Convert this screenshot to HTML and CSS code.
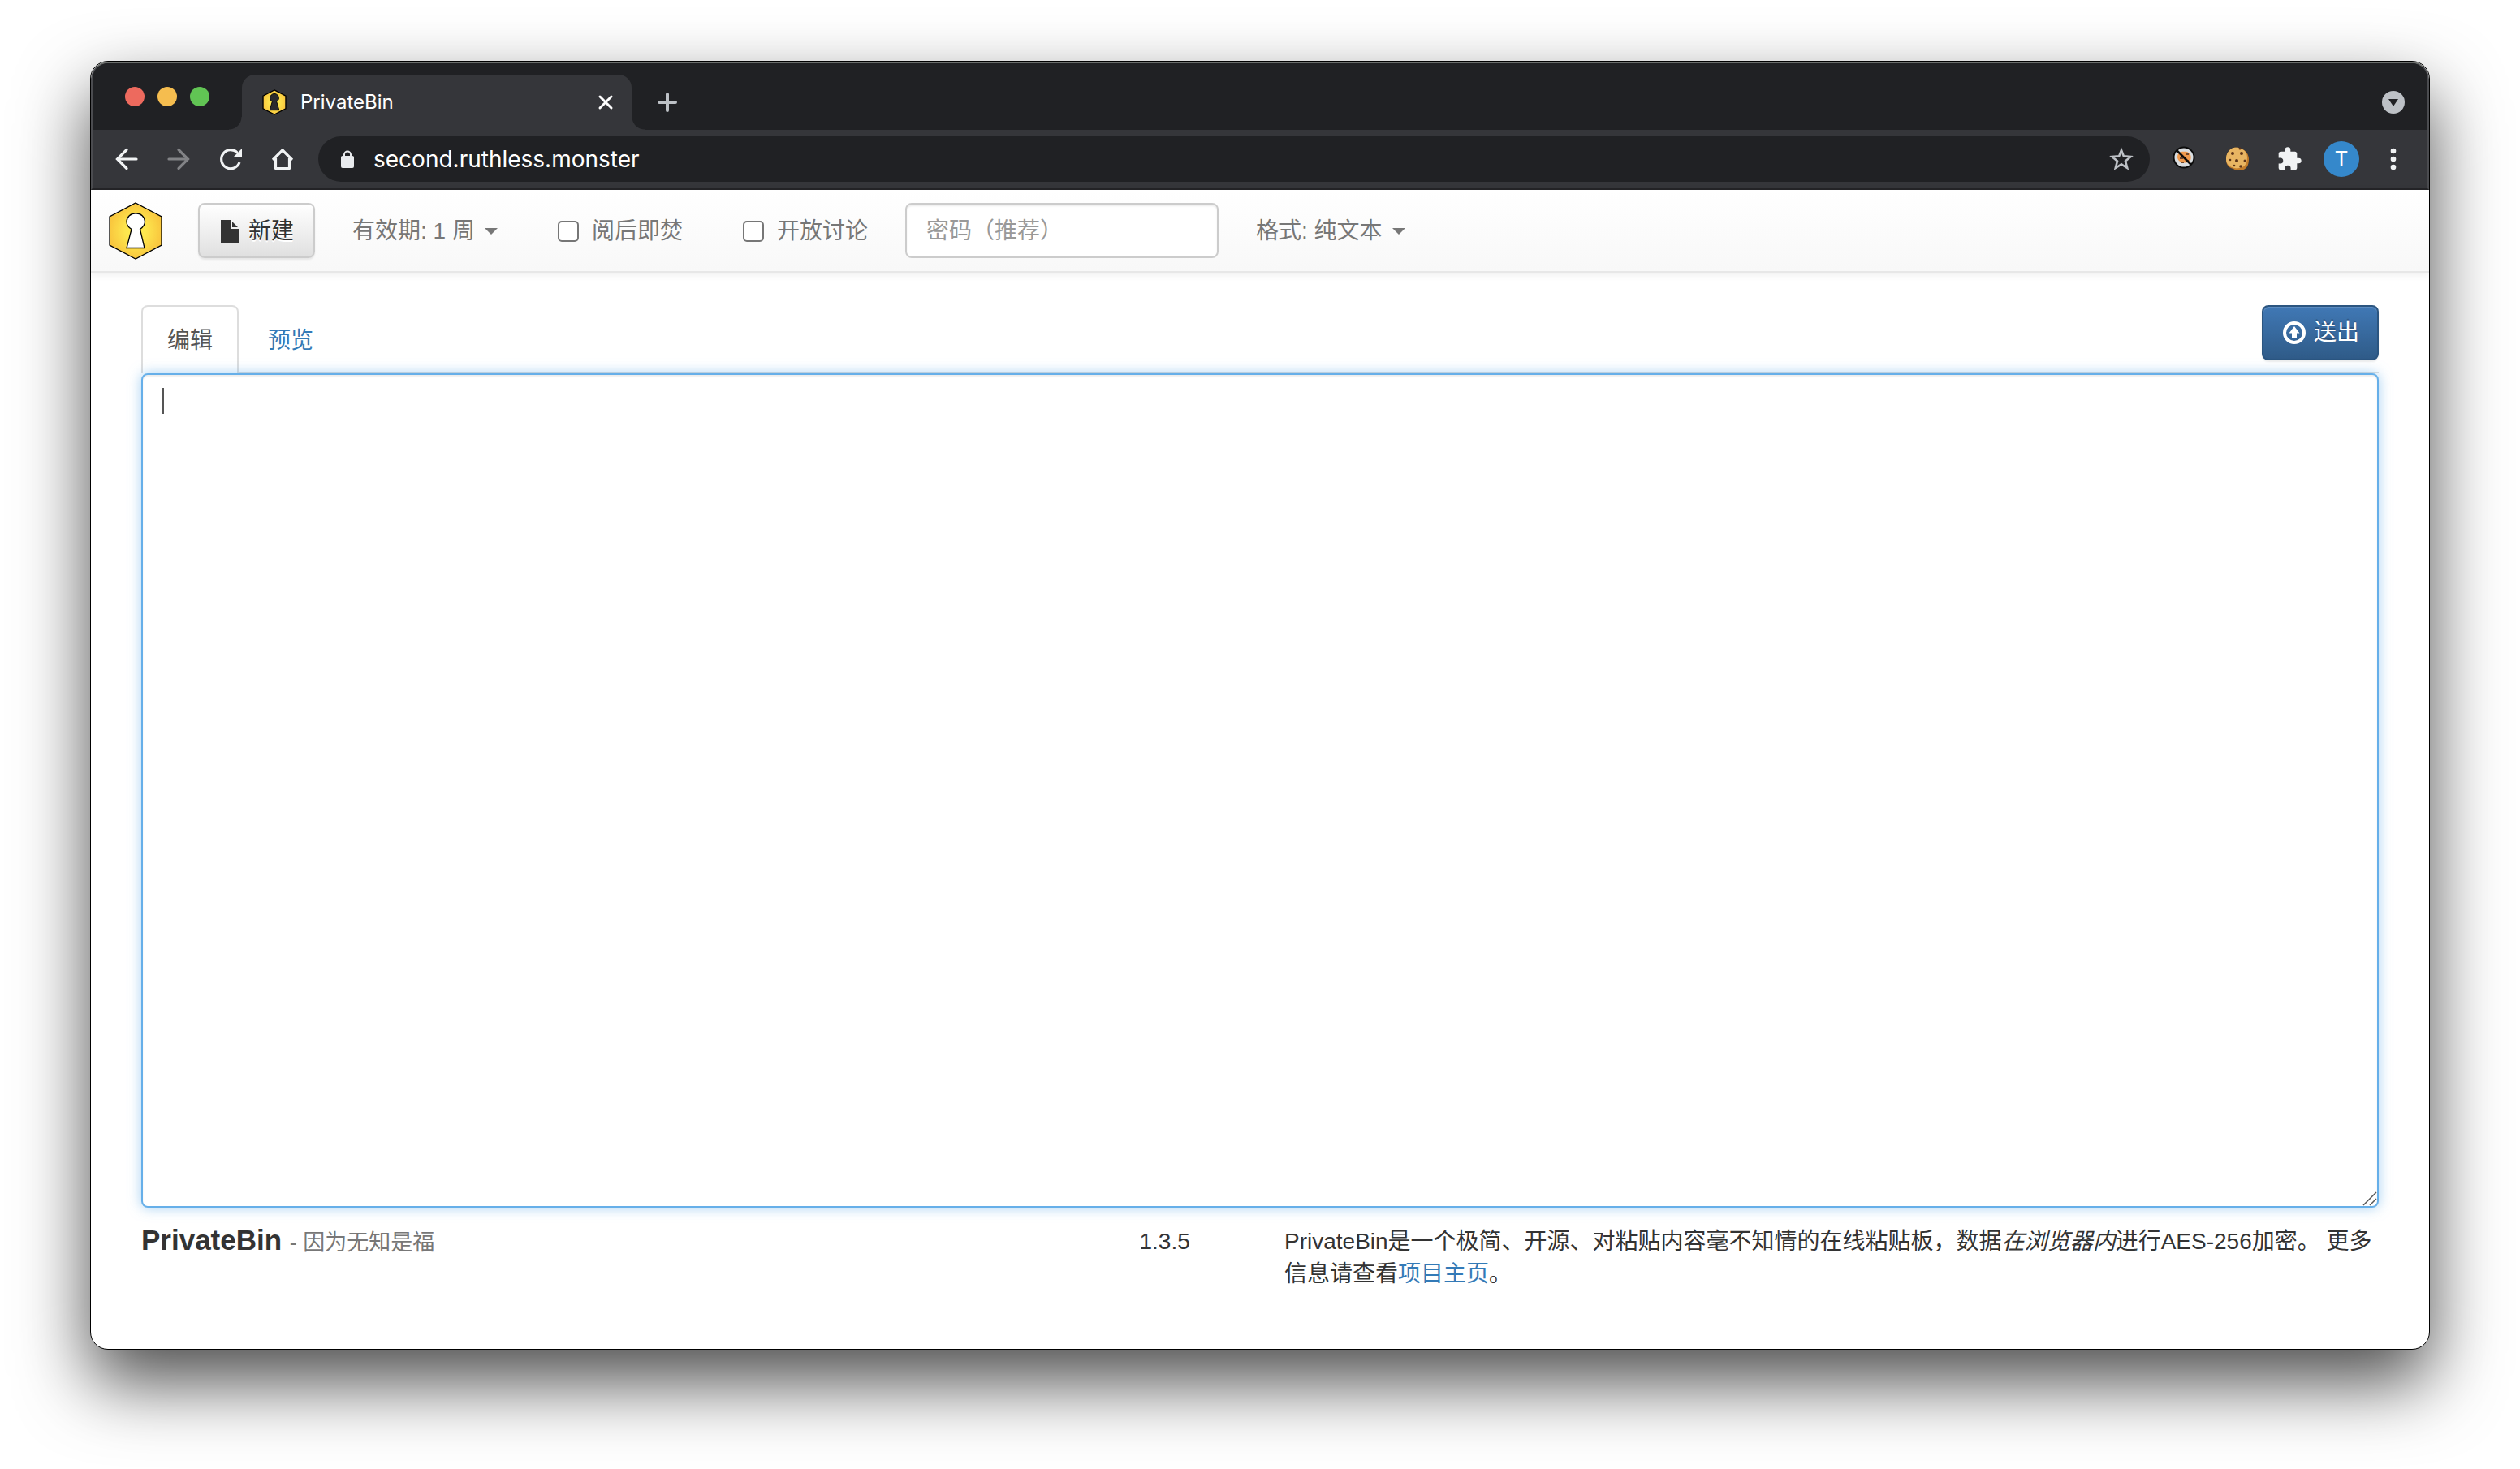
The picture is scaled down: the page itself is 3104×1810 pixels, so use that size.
FILE: index.html
```html
<!DOCTYPE html>
<html lang="zh-CN">
<head>
<meta charset="utf-8">
<title>PrivateBin</title>
<link rel="stylesheet" href="styles.css">
</head>
<body>
<div class="window">
  <header class="chrome">
    <div class="tabstrip">
      <div class="lights">
        <button class="light light-close" aria-label="Close"></button>
        <button class="light light-min" aria-label="Minimize"></button>
        <button class="light light-max" aria-label="Zoom"></button>
      </div>
      <div class="browser-tab">
        <svg class="favicon" viewBox="0 0 66 71" aria-hidden="true">
          <polygon points="33,2 64,18 64,53 33,69 2,53 2,18" fill="url(#gold)" stroke="#000" stroke-width="3"/>
          <path d="M20 57 27 34C23 31 21 28 21 24A12 12 0 0 1 45 24C45 28 43 31 39 34L46 57Z" fill="#2b2b2e" stroke="#000" stroke-width="2"/>
        </svg>
        <span class="browser-tab-title">PrivateBin</span>
        <button class="icon-btn" aria-label="Close tab">
          <svg width="20" height="20" viewBox="0 0 20 20"><path d="M3 3 17 17M17 3 3 17" stroke="#fff" stroke-width="3" stroke-linecap="round"/></svg>
        </button>
      </div>
      <button class="icon-btn new-tab" aria-label="New tab">
        <svg width="24" height="24" viewBox="0 0 24 24"><path d="M12 2V22M2 12H22" stroke="#bdc1c6" stroke-width="4" stroke-linecap="round"/></svg>
      </button>
      <button class="icon-btn tab-search" aria-label="Search tabs">
        <svg width="28" height="28" viewBox="0 0 28 28"><circle cx="14" cy="14" r="14" fill="#bdc1c6"/><path d="M8 10H20L14 19Z" fill="#202124"/></svg>
      </button>
    </div>
    <div class="toolbar">
      <button class="icon-btn nav-btn" aria-label="Back">
        <svg width="32" height="32" viewBox="0 0 32 32"><path d="M28 16H5M16 4.500 4.500 16 16 27.500" fill="none" stroke="#f1f3f4" stroke-width="3.200" stroke-linecap="round"/></svg>
      </button>
      <button class="icon-btn nav-btn" aria-label="Forward">
        <svg width="32" height="32" viewBox="0 0 32 32"><path d="M4 16H27M16 4.500 27.500 16 16 27.500" fill="none" stroke="#828386" stroke-width="3.200" stroke-linecap="round"/></svg>
      </button>
      <button class="icon-btn nav-btn" aria-label="Reload">
        <svg width="32" height="32" viewBox="0 0 32 32"><path d="M27 20A11.500 11.500 0 1 1 24.500 8.300" fill="none" stroke="#f1f3f4" stroke-width="3.200"/><path d="M30 3V14H19Z" fill="#f1f3f4"/></svg>
      </button>
      <button class="icon-btn nav-btn" aria-label="Home">
        <svg width="32" height="32" viewBox="0 0 32 32"><path d="M4 17 16 5 28 17M7.500 15V27.500H24.500V15" fill="none" stroke="#f1f3f4" stroke-width="3.200" stroke-linejoin="round"/></svg>
      </button>
      <div class="omnibox">
        <svg width="16" height="22" viewBox="0 0 16 22" aria-hidden="true"><rect y="7" width="16" height="15" rx="2" fill="#e8eaed"/><path d="M4 8V5.500A4 4 0 0 1 12 5.500V8" fill="none" stroke="#e8eaed" stroke-width="2"/></svg>
        <input class="url" type="text" aria-label="Address" value="second.ruthless.monster">
        <button class="icon-btn" aria-label="Bookmark">
          <svg width="30" height="30" viewBox="0 0 30 30"><path d="M15 4 17.900 11.400 26.500 12 20 17.400 22.200 26 15 21.400 7.800 26 10 17.400 3.500 12 12.100 11.400Z" fill="none" stroke="#bdc1c6" stroke-width="2.600"/></svg>
        </button>
      </div>
      <div class="extensions">
        <button class="icon-btn ext blocker" aria-label="Cookie blocker">
          <svg width="32" height="44" viewBox="0 0 32 44"><circle cx="16" cy="20" r="12.500" fill="#d9dde0" stroke="#0c0c0c" stroke-width="2"/><path d="M8 20C8 13 13 12 20 13 25 15 26 21 23 25 18 28 9 27 8 20Z" fill="#ef9a4e"/><path d="M11 21H15M19 16H22M19 24H22M13 26H16" stroke="#70462a" stroke-width="2"/><path d="M7 11 25 29" stroke="#0c0c0c" stroke-width="2.500"/></svg>
        </button>
        <button class="icon-btn ext" aria-label="Cookies">
          <svg width="32" height="32" viewBox="0 0 32 32"><path d="M9 3C13 1 18 2 20 3 27 5 30 11 30 16 30 24 27 29 20 30 16 30 14 30 11 28 4 26 2 22 2 16 2 10 5 5 9 3Z" fill="#c47d2a"/><path d="M9 3C13 1 18 2 20 3 26 5 28 10 28 14 28 22 24 27 18 27 15 28 12 27 9 26 4 24 2 20 2 16 2 10 5 5 9 3Z" fill="#e8b562"/><g fill="#5d3418"><circle cx="10" cy="9" r="2"/><circle cx="21" cy="9" r="2"/><circle cx="15" cy="18" r="2"/><circle cx="25" cy="18" r="1.500"/><circle cx="7" cy="17" r="1.300"/><circle cx="20" cy="25" r="1.800"/><circle cx="12" cy="24" r="1.300"/><circle cx="19" cy="3" r="1.500"/></g></svg>
        </button>
        <button class="icon-btn ext" aria-label="Extensions">
          <svg width="32" height="32" viewBox="0 0 24 24"><path d="M20.500 11H19V7c0-1.100-.9-2-2-2h-4V3.500a2.500 2.500 0 0 0-5 0V5H4c-1.100 0-2 .9-2 2v3.800h1.500a2.700 2.700 0 0 1 0 5.400H2V20c0 1.100.9 2 2 2h3.800v-1.500a2.700 2.700 0 0 1 5.400 0V22H17c1.100 0 2-.9 2-2v-4h1.500a2.500 2.500 0 0 0 0-5z" fill="#f1f3f4"/></svg>
        </button>
        <button class="avatar" aria-label="Profile">T</button>
        <button class="icon-btn menu" aria-label="Menu">
          <svg width="8" height="28" viewBox="0 0 8 28"><g fill="#f1f3f4"><circle cx="4" cy="4" r="3.300"/><circle cx="4" cy="14" r="3.300"/><circle cx="4" cy="24" r="3.300"/></g></svg>
        </button>
      </div>
    </div>
  </header>

  <nav class="navbar">
    <a class="brand" href="#" aria-label="PrivateBin">
      <svg width="66" height="71" viewBox="0 0 66 71">
        <defs><radialGradient id="gold"><stop offset="0" stop-color="#ffee50"/><stop offset="0.400" stop-color="#fde64e"/><stop offset="1" stop-color="#f9c73e"/></radialGradient></defs>
        <polygon points="33,1 65,18 65,53 33,70 1,53 1,18" fill="url(#gold)" stroke="#000" stroke-width="1.300"/>
        <path d="M22 56.500 28 33.500C24 31 22 28 22 24A11 10 0 0 1 44.500 24C44.500 28 42 31 38.500 33.500L44 56.500Z" fill="#fff" stroke="#000" stroke-width="1.300"/>
      </svg>
    </a>
    <button class="btn btn-default">
      <svg width="22" height="28" viewBox="0 0 22 28" aria-hidden="true"><path d="M0 0H12V11H22V28H0Z M14 2 21 9H14Z" fill="#333"/></svg>
      新建
    </button>
    <button class="dropdown">有效期: 1 周<span class="caret"></span></button>
    <label class="check"><input type="checkbox">阅后即焚</label>
    <label class="check"><input type="checkbox">开放讨论</label>
    <input class="password" type="password" placeholder="密码（推荐）" aria-label="密码">
    <button class="dropdown">格式: 纯文本<span class="caret"></span></button>
  </nav>

  <main class="content">
    <div class="tab-row">
      <a class="tab tab-active" href="#edit">编辑</a>
      <a class="tab" href="#preview">预览</a>
      <button class="btn btn-primary">
        <svg width="28" height="28" viewBox="0 0 28 28" aria-hidden="true"><circle cx="14" cy="14" r="12" fill="none" stroke="#fff" stroke-width="4"/><path d="M14 6 20.500 14.500H17V21H11V14.500H7.500Z" fill="#fff"/></svg>
        送出
      </button>
    </div>
    <div class="editor">
      <textarea class="message" aria-label="编辑"></textarea>
      <span class="cursor"></span>
      <svg class="grip" width="18" height="18" viewBox="0 0 18 18" aria-hidden="true"><path d="M1 17 17 1M9 17 17 9" stroke="#555" stroke-width="1.500"/></svg>
    </div>
  </main>

  <footer class="footer">
    <h4 class="name">PrivateBin <small>- 因为无知是福</small></h4>
    <p class="version">1.3.5</p>
    <p class="about">PrivateBin是一个极简、开源、对粘贴内容毫不知情的在线粘贴板，数据<i>在浏览器内</i>进行AES-256加密。 更多信息请查看<a href="#">项目主页</a>。</p>
  </footer>
</div>
</body>
</html>
```
FILE: styles.css
```css
* { box-sizing: border-box; }

body {
  margin: 0;
  min-height: 100vh;
  padding: 75px 111px 147px;
  display: flex;
  background: #fff;
  color: #333;
  font: 28px/40px "Liberation Sans", "Noto Sans CJK SC", sans-serif;
}

button, input, textarea { font: inherit; color: inherit; }
button { border: 0; padding: 0; background: none; white-space: nowrap; }
svg { display: block; flex: none; }
a { color: #337ab7; text-decoration: none; }

.window {
  flex: 1;
  min-width: 0;
  display: flex;
  flex-direction: column;
  overflow: hidden;
  border: 1px solid #000;
  border-radius: 22px;
  background: #fff;
  box-shadow: 0 40px 88px rgba(0, 0, 0, .7);
}

/* Browser chrome */
.chrome {
  border: 2px solid #4b4c50;
  border-top-color: #6b6e6c;
  border-bottom-color: #242427;
  border-radius: 21px 21px 0 0;
  background: #35363a;
  font-family: Inter, "Noto Sans CJK SC", sans-serif;
}

.tabstrip {
  display: flex;
  height: 82px;
  padding: 14px 28px 0 40px;
  border-radius: 19px 19px 0 0;
  background: #202124;
}

.lights { display: flex; gap: 16px; padding-top: 15px; width: 144px; }
.light { width: 24px; height: 24px; border-radius: 50%; }
.light-close { background: #ed6a5e; }
.light-min { background: #f5bd4f; }
.light-max { background: #61c454; }

.browser-tab {
  position: relative;
  display: flex;
  align-items: center;
  width: 480px;
  padding: 0 22px 0 24px;
  border-radius: 16px 16px 0 0;
  background: #35363a;
  color: #fff;
  font-size: 24px;
}
.browser-tab::before, .browser-tab::after {
  content: "";
  position: absolute;
  bottom: 0;
  width: 16px;
  height: 16px;
}
.browser-tab::before { right: 100%; background: radial-gradient(circle at 0 0, #202124 15px, #35363a 16px); }
.browser-tab::after { left: 100%; background: radial-gradient(circle at 100% 0, #202124 15px, #35363a 16px); }
.favicon { width: 32px; height: 32px; }
.browser-tab-title { flex: 1; padding-left: 16px; }
.new-tab { padding: 0 32px; }
.tab-search { margin-left: auto; }

.toolbar {
  display: flex;
  align-items: center;
  height: 72px;
  padding: 0 38px 0 26px;
}
.nav-btn { width: 32px; margin-right: 32px; }
.omnibox {
  flex: 1;
  display: flex;
  align-items: center;
  height: 56px;
  margin-left: -4px;
  padding: 0 20px 0 28px;
  border-radius: 28px;
  background: #202124;
}
.url {
  flex: 1;
  min-width: 0;
  padding: 0 0 0 24px;
  border: 0;
  outline: 0;
  background: none;
  color: #fff;
}
.extensions { display: flex; align-items: center; gap: 32px; padding-left: 26px; }
.ext { width: 32px; }
.blocker { margin-right: 2px; }
.avatar {
  width: 44px;
  height: 44px;
  margin-left: -6px;
  border-radius: 50%;
  background: #3588cb;
  color: #fff;
  font: 26px/44px Roboto, sans-serif;
}
.menu { padding-left: 6px; }

/* Page navigation */
.navbar {
  display: flex;
  align-items: center;
  height: 102px;
  padding: 0 22px;
  border-bottom: 2px solid #e7e7e7;
  background: linear-gradient(#fff, #f8f8f8);
  box-shadow: 0 2px 10px rgba(0, 0, 0, .075);
  color: #777;
}
.brand { width: 110px; }

.btn {
  display: flex;
  align-items: center;
  gap: 10px;
  width: 144px;
  height: 68px;
  padding: 2px 24px 0;
  border: 2px solid #ccc;
  border-radius: 8px;
}
.btn-default {
  padding-left: 26px;
  gap: 12px;
  color: #333;
  background: linear-gradient(#fff, #e0e0e0);
  box-shadow: inset 0 2px 0 rgba(255, 255, 255, .15), 0 2px 2px rgba(0, 0, 0, .075);
  text-shadow: 0 2px 0 #fff;
}
.btn-primary {
  margin-left: auto;
  padding-top: 0;
  border-color: #2b5580;
  color: #fff;
  background: linear-gradient(#4078b5, #2f5b88);
  box-shadow: inset 0 2px 0 rgba(255, 255, 255, .15), 0 2px 2px rgba(0, 0, 0, .075);
  text-shadow: 0 -2px 0 rgba(0, 0, 0, .2);
}

.dropdown { display: flex; align-items: center; gap: 12px; margin-left: 46px; padding-top: 2px; }
.caret {
  border: 8px solid transparent;
  border-top-color: #777;
  border-bottom: 0;
}
.check { display: flex; align-items: center; gap: 16px; margin-left: 74px; padding-top: 2px; }
.check input {
  appearance: none;
  width: 26px;
  height: 26px;
  margin: 0;
  border: 2px solid #767676;
  border-radius: 5px;
  background: #fff;
}
.password {
  width: 386px;
  height: 68px;
  margin-left: 46px;
  padding: 2px 24px 0;
  border: 2px solid #ccc;
  border-radius: 8px;
  background: #fff;
  box-shadow: inset 0 2px 2px rgba(0, 0, 0, .075);
}
.password::placeholder { color: #999; opacity: 1; }

/* Editor */
.content {
  flex: 1;
  display: flex;
  flex-direction: column;
  padding: 40px 62px 0;
}
.tab-row {
  display: flex;
  align-items: flex-start;
  height: 84px;
  border-bottom: 2px solid #ddd;
}
.tab {
  height: 84px;
  padding: 22px 30px 0;
  border: 2px solid transparent;
  border-bottom: 0;
  border-radius: 8px 8px 0 0;
}
.tab + .tab { margin-left: 4px; }
.tab-active { border-color: #ddd; background: #fff; color: #555; }

.editor { position: relative; flex: 1; display: flex; }
.message {
  flex: 1;
  resize: none;
  padding: 12px 24px;
  border: 2px solid #66afe9;
  border-radius: 8px;
  outline: 0;
  background: #fff;
  box-shadow: inset 0 2px 2px rgba(0, 0, 0, .075), 0 0 16px rgba(102, 175, 233, .6);
}
.cursor { position: absolute; left: 26px; top: 18px; width: 2px; height: 32px; background: #555; }
.grip { position: absolute; right: 2px; bottom: 2px; }

/* Footer */
.footer {
  display: grid;
  grid-template-columns: 5fr 1fr 6fr;
  height: 174px;
  padding: 20px 32px 0;
}
.footer > * { margin: 0; padding: 0 30px; }
.name { font-size: 35px; font-weight: 700; }
.name small { color: #777; font-size: 27px; font-weight: 400; }
.footer > p { padding-top: 2px; }
.version { text-align: center; }
```
